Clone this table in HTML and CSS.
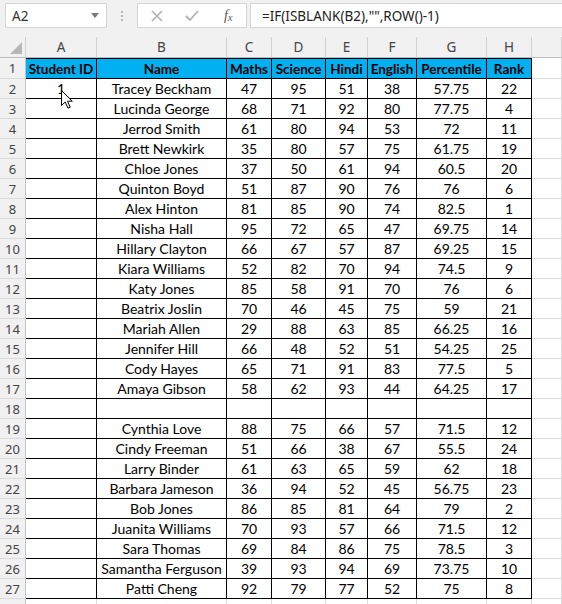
FILE: index.html
```html
<!DOCTYPE html>
<html>
<head>
<meta charset="utf-8">
<link rel="stylesheet" href="styles.css">
</head>
<body>
<div class="app">
  <div class="topbar">
    <div class="namebox"><span>A2</span><svg class="caret" width="8" height="5" viewBox="0 0 8 5"><path d="M0 0H8L4 5Z" fill="#7a7a7a"/></svg></div>
    <div class="grip"><i></i><i></i><i></i></div>
    <div class="fxbox">
      <svg class="ico" width="12" height="12" viewBox="0 0 12 12"><path d="M1 1L11 11M11 1L1 11" stroke="#b0b0b0" stroke-width="1.6"/></svg>
      <svg class="ico" width="14" height="12" viewBox="0 0 14 12"><path d="M1 6L5 10L13 1" stroke="#b0b0b0" stroke-width="1.8" fill="none"/></svg>
      <span class="fx">f<sub>x</sub></span>
    </div>
    <div class="formula">=IF(ISBLANK(B2),"",ROW()-1)</div>
  </div>
  <div class="sheet">
    <div class="r colhdr"><div class="corner"><svg width="12" height="12" viewBox="0 0 12 12"><path d="M12 0V12H0Z" fill="#b7b7b7"/></svg></div><div>A</div><div>B</div><div>C</div><div>D</div><div>E</div><div>F</div><div>G</div><div>H</div><div></div></div>
    <div class="r first"><div class="rh">1</div><div class="t hd">Student ID</div><div class="t hd">Name</div><div class="t hd">Maths</div><div class="t hd">Science</div><div class="t hd">Hindi</div><div class="t hd">English</div><div class="t hd">Percentile</div><div class="t hd">Rank</div><div></div></div>
    <div class="r"><div class="rh">2</div><div class="t">1</div><div class="t">Tracey Beckham</div><div class="t">47</div><div class="t">95</div><div class="t">51</div><div class="t">38</div><div class="t">57.75</div><div class="t">22</div><div></div></div>
    <div class="r"><div class="rh">3</div><div class="t"></div><div class="t">Lucinda George</div><div class="t">68</div><div class="t">71</div><div class="t">92</div><div class="t">80</div><div class="t">77.75</div><div class="t">4</div><div></div></div>
    <div class="r"><div class="rh">4</div><div class="t"></div><div class="t">Jerrod Smith</div><div class="t">61</div><div class="t">80</div><div class="t">94</div><div class="t">53</div><div class="t">72</div><div class="t">11</div><div></div></div>
    <div class="r"><div class="rh">5</div><div class="t"></div><div class="t">Brett Newkirk</div><div class="t">35</div><div class="t">80</div><div class="t">57</div><div class="t">75</div><div class="t">61.75</div><div class="t">19</div><div></div></div>
    <div class="r"><div class="rh">6</div><div class="t"></div><div class="t">Chloe Jones</div><div class="t">37</div><div class="t">50</div><div class="t">61</div><div class="t">94</div><div class="t">60.5</div><div class="t">20</div><div></div></div>
    <div class="r"><div class="rh">7</div><div class="t"></div><div class="t">Quinton Boyd</div><div class="t">51</div><div class="t">87</div><div class="t">90</div><div class="t">76</div><div class="t">76</div><div class="t">6</div><div></div></div>
    <div class="r"><div class="rh">8</div><div class="t"></div><div class="t">Alex Hinton</div><div class="t">81</div><div class="t">85</div><div class="t">90</div><div class="t">74</div><div class="t">82.5</div><div class="t">1</div><div></div></div>
    <div class="r"><div class="rh">9</div><div class="t"></div><div class="t">Nisha Hall</div><div class="t">95</div><div class="t">72</div><div class="t">65</div><div class="t">47</div><div class="t">69.75</div><div class="t">14</div><div></div></div>
    <div class="r"><div class="rh">10</div><div class="t"></div><div class="t">Hillary Clayton</div><div class="t">66</div><div class="t">67</div><div class="t">57</div><div class="t">87</div><div class="t">69.25</div><div class="t">15</div><div></div></div>
    <div class="r"><div class="rh">11</div><div class="t"></div><div class="t">Kiara Williams</div><div class="t">52</div><div class="t">82</div><div class="t">70</div><div class="t">94</div><div class="t">74.5</div><div class="t">9</div><div></div></div>
    <div class="r"><div class="rh">12</div><div class="t"></div><div class="t">Katy Jones</div><div class="t">85</div><div class="t">58</div><div class="t">91</div><div class="t">70</div><div class="t">76</div><div class="t">6</div><div></div></div>
    <div class="r"><div class="rh">13</div><div class="t"></div><div class="t">Beatrix Joslin</div><div class="t">70</div><div class="t">46</div><div class="t">45</div><div class="t">75</div><div class="t">59</div><div class="t">21</div><div></div></div>
    <div class="r"><div class="rh">14</div><div class="t"></div><div class="t">Mariah Allen</div><div class="t">29</div><div class="t">88</div><div class="t">63</div><div class="t">85</div><div class="t">66.25</div><div class="t">16</div><div></div></div>
    <div class="r"><div class="rh">15</div><div class="t"></div><div class="t">Jennifer Hill</div><div class="t">66</div><div class="t">48</div><div class="t">52</div><div class="t">51</div><div class="t">54.25</div><div class="t">25</div><div></div></div>
    <div class="r"><div class="rh">16</div><div class="t"></div><div class="t">Cody Hayes</div><div class="t">65</div><div class="t">71</div><div class="t">91</div><div class="t">83</div><div class="t">77.5</div><div class="t">5</div><div></div></div>
    <div class="r"><div class="rh">17</div><div class="t"></div><div class="t">Amaya Gibson</div><div class="t">58</div><div class="t">62</div><div class="t">93</div><div class="t">44</div><div class="t">64.25</div><div class="t">17</div><div></div></div>
    <div class="r"><div class="rh">18</div><div class="t"></div><div class="t"></div><div class="t"></div><div class="t"></div><div class="t"></div><div class="t"></div><div class="t"></div><div class="t"></div><div></div></div>
    <div class="r"><div class="rh">19</div><div class="t"></div><div class="t">Cynthia Love</div><div class="t">88</div><div class="t">75</div><div class="t">66</div><div class="t">57</div><div class="t">71.5</div><div class="t">12</div><div></div></div>
    <div class="r"><div class="rh">20</div><div class="t"></div><div class="t">Cindy Freeman</div><div class="t">51</div><div class="t">66</div><div class="t">38</div><div class="t">67</div><div class="t">55.5</div><div class="t">24</div><div></div></div>
    <div class="r"><div class="rh">21</div><div class="t"></div><div class="t">Larry Binder</div><div class="t">61</div><div class="t">63</div><div class="t">65</div><div class="t">59</div><div class="t">62</div><div class="t">18</div><div></div></div>
    <div class="r"><div class="rh">22</div><div class="t"></div><div class="t">Barbara Jameson</div><div class="t">36</div><div class="t">94</div><div class="t">52</div><div class="t">45</div><div class="t">56.75</div><div class="t">23</div><div></div></div>
    <div class="r"><div class="rh">23</div><div class="t"></div><div class="t">Bob Jones</div><div class="t">86</div><div class="t">85</div><div class="t">81</div><div class="t">64</div><div class="t">79</div><div class="t">2</div><div></div></div>
    <div class="r"><div class="rh">24</div><div class="t"></div><div class="t">Juanita Williams</div><div class="t">70</div><div class="t">93</div><div class="t">57</div><div class="t">66</div><div class="t">71.5</div><div class="t">12</div><div></div></div>
    <div class="r"><div class="rh">25</div><div class="t"></div><div class="t">Sara Thomas</div><div class="t">69</div><div class="t">84</div><div class="t">86</div><div class="t">75</div><div class="t">78.5</div><div class="t">3</div><div></div></div>
    <div class="r"><div class="rh">26</div><div class="t"></div><div class="t">Samantha Ferguson</div><div class="t">39</div><div class="t">93</div><div class="t">94</div><div class="t">69</div><div class="t">73.75</div><div class="t">10</div><div></div></div>
    <div class="r"><div class="rh">27</div><div class="t"></div><div class="t">Patti Cheng</div><div class="t">92</div><div class="t">79</div><div class="t">77</div><div class="t">52</div><div class="t">75</div><div class="t">8</div><div></div></div>
    <div class="r"><div class="rh"></div><div></div><div></div><div></div><div></div><div></div><div></div><div></div><div></div><div></div></div>
    <svg class="cursor" width="12" height="19" viewBox="0 0 12 19"><path d="M0.5 0.5V15.5L4.2 12L7 18.2L9.2 17.2L6.5 11.2H11.3Z" fill="#fff" stroke="#000" stroke-width="1" stroke-linejoin="round"/></svg>
  </div>
</div>
</body>
</html>
```
FILE: styles.css
```css
* { box-sizing: border-box; }
html, body { margin: 0; padding: 0; background: #fff; }
body { width: 562px; height: 604px; overflow: hidden; font-family: "Lato", "Liberation Sans", sans-serif; }

.topbar {
  height: 37px;
  background: #f1f1f1;
  display: flex;
  align-items: flex-start;
  padding: 3px 0 0 5px;
  font-family: "Noto Sans", "Liberation Sans", sans-serif;
}
.namebox {
  width: 102px;
  height: 25px;
  background: #fff;
  border: 1px solid #d6d6d6;
  display: flex;
  align-items: center;
  justify-content: space-between;
  padding: 0 7px 0 6px;
  font-size: 13.5px;
  color: #333;
}
.grip {
  width: 30px;
  height: 25px;
  display: flex;
  flex-direction: column;
  align-items: center;
  justify-content: center;
  gap: 2px;
}
.grip i { width: 2px; height: 2px; background: #b5b5b5; display: block; }
.fxbox {
  width: 110px;
  height: 25px;
  background: #fff;
  border: 1px solid #d6d6d6;
  display: flex;
  align-items: center;
  padding-left: 13px;
  gap: 22px;
}
.fx {
  font-family: "Liberation Serif", serif;
  font-style: italic;
  font-size: 14px;
  color: #555;
  margin-left: 3px;
}
.fx sub { font-size: 10px; vertical-align: -1px; }
.formula {
  flex: 1;
  height: 25px;
  margin-left: 3px;
  background: #fff;
  border: 1px solid #d6d6d6;
  border-right: none;
  display: flex;
  align-items: center;
  padding-left: 11px;
  font-size: 13.5px;
  color: #222;
  white-space: nowrap;
}

.sheet { position: relative; }
.r {
  display: grid;
  grid-template-columns: 26px 71px 130px 45px 54px 42px 49px 70px 45px 1fr;
  height: 20px;
}
.r > div {
  border-right: 1px solid #dadada;
  border-bottom: 1px solid #dadada;
  display: flex;
  align-items: center;
  justify-content: center;
  white-space: nowrap;
  overflow: hidden;
  font-size: 14px;
  color: #000;
}
.r > .rh {
  background: #f1f1f1;
  border-right-color: #c4c4c4;
  border-bottom-color: #dadada;
  color: #444;
  font-family: "Noto Sans", "Liberation Sans", sans-serif;
  font-size: 13px;
}
.colhdr { height: 21px; }
.colhdr > div {
  background: #f1f1f1;
  border-right-color: #d2d2d2;
  border-bottom-color: #bdbdbd;
  color: #444;
  font-family: "Noto Sans", "Liberation Sans", sans-serif;
  font-size: 13.5px;
}
.colhdr > .corner { align-items: flex-end; justify-content: flex-end; padding: 0 3px 3px 0; }
.r > .t { border-right-color: #000; border-bottom-color: #000; }
.first { height: 21px; }
.first > .t { border-top: 1px solid #000; }
.r > .hd { background: #00b0f0; font-weight: 700; font-size: 13.5px; }
.cursor { position: absolute; left: 61px; top: 53px; }
```
